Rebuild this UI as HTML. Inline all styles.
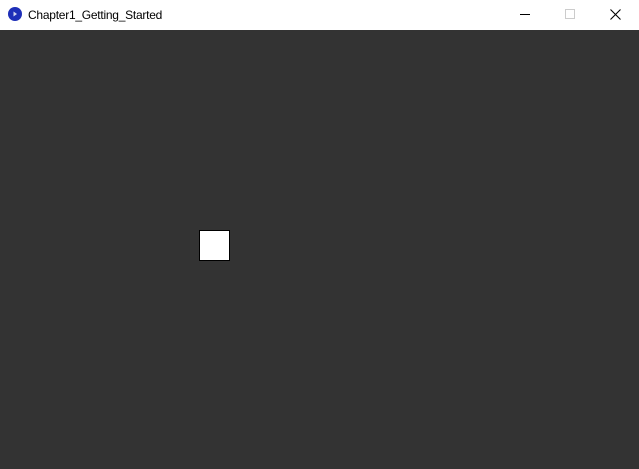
<!DOCTYPE html>
<html><head><style>
html,body{margin:0;padding:0;width:639px;height:469px;overflow:hidden;background:#333333;font-family:"Liberation Sans",sans-serif}
#bar{position:absolute;left:0;top:0;width:639px;height:30px;background:#fff}
#t{position:absolute;left:28px;top:8px;font-size:12px;letter-spacing:-0.25px;color:#000}
#sq{position:absolute;left:199px;top:230px;width:29px;height:29px;background:#fff;border:1px solid #000}
</style></head><body>
<div id="bar">
<svg style="position:absolute;left:0;top:0" width="639" height="30">
<circle cx="15" cy="14" r="7" fill="#1e2fb8"/>
<path d="M13.5 11.5 L17 14 L13.5 16.5Z" fill="#fff" opacity="0.8"/>
<line x1="520" y1="14.5" x2="530" y2="14.5" stroke="#000" stroke-width="1"/>
<rect x="565.5" y="9.5" width="9" height="9" fill="none" stroke="#ccc"/>
<path d="M610.5 9.5 L620.5 19.5 M620.5 9.5 L610.5 19.5" stroke="#000" stroke-width="1.1"/>
</svg>
<div id="t">Chapter1_Getting_Started</div>
</div>
<div id="sq"></div>
</body></html>
